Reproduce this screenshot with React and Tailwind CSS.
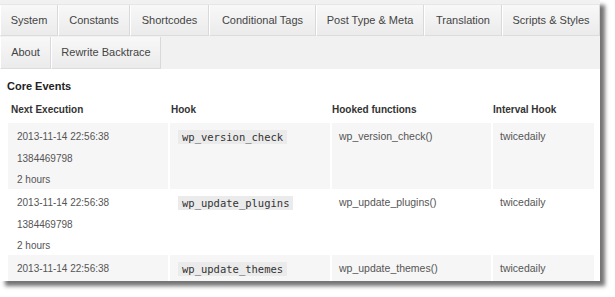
import React from "react";

const tabsRow1 = [
  ["System", 58],
  ["Constants", 72],
  ["Shortcodes", 79],
  ["Conditional Tags", 107],
  ["Post Type & Meta", 108],
  ["Translation", 78],
  ["Scripts & Styles", 98],
];
const tabsRow2 = [
  ["About", 51],
  ["Rewrite Backtrace", 110],
];

const rows = [
  { hook: "wp_version_check", fn: "wp_version_check()", bg: "bg-[#f6f6f6]" },
  { hook: "wp_update_plugins", fn: "wp_update_plugins()", bg: "bg-white" },
  { hook: "wp_update_themes", fn: "wp_update_themes()", bg: "bg-[#f6f6f6]" },
];

function Tab({ label, w }) {
  return (
    <div
      style={{ width: w }}
      className="h-full flex items-center justify-center shrink-0 border-l border-l-white border-r border-r-[#d9d9d9] border-b border-b-[#dcdcdc] bg-gradient-to-b from-[#f8f8f8] to-[#ebebeb] text-[11px] text-[#444]"
    >
      {label}
    </div>
  );
}

export default function App() {
  return (
    <div className="w-[615px] h-[297px] bg-white overflow-hidden" style={{ fontFamily: '"Liberation Sans", Arial, sans-serif' }}>
      <div className="w-[600px] h-[281px] overflow-hidden bg-white shadow-[5px_5px_4px_rgba(0,0,0,0.55)]">
        <div className="bg-[#f1f1f1] pt-[4px] h-[69px]">
          <div className="flex h-[32px] border-t border-t-[#e6e6e6]">
            {tabsRow1.map(([l, w]) => (
              <Tab key={l} label={l} w={w} />
            ))}
          </div>
          <div className="flex h-[33px] pt-[1px]">
            {tabsRow2.map(([l, w]) => (
              <Tab key={l} label={l} w={w} />
            ))}
          </div>
        </div>
        <div className="pt-[9px] pl-[7px] text-[11px] font-bold text-[#222] leading-[16px]">Core Events</div>
        <div className="ml-[8px] mt-[4px] grid grid-cols-[160px_160px_159px_101px] gap-x-[2px] text-[10px] font-bold text-[#333] h-[22px] items-center">
          <div className="pl-[3px]">Next Execution</div>
          <div className="pl-[1px]">Hook</div>
          <div className="pl-[0px]">Hooked functions</div>
          <div className="pl-[0px]">Interval Hook</div>
        </div>
        <div className="ml-[8px] mt-[3px] flex flex-col">
          {rows.map((r) => (
            <div key={r.hook} className="grid grid-cols-[160px_160px_159px_101px] gap-x-[2px] h-[66px] shrink-0">
              <div className={`${r.bg} pl-[9px] pt-[3px] text-[10px] leading-[21.5px] text-[#555]`}>
                <div>2013-11-14 22:56:38</div>
                <div>1384469798</div>
                <div>2 hours</div>
              </div>
              <div className={`${r.bg} pl-[8px] pt-[7px] flex items-start`}>
                <span
                  className="block bg-[#ebebeb] px-[4px] py-[1px] text-[10.5px] leading-[12px] text-[#333]"
                  style={{ fontFamily: '"DejaVu Sans Mono", monospace' }}
                >
                  {r.hook}
                </span>
              </div>
              <div className={`${r.bg} pl-[7px] pt-[3px] text-[10.5px] leading-[21.5px] text-[#555]`}>{r.fn}</div>
              <div className={`${r.bg} pl-[7px] pt-[3px] text-[10.5px] leading-[21.5px] text-[#555]`}>twicedaily</div>
            </div>
          ))}
        </div>
      </div>
    </div>
  );
}
